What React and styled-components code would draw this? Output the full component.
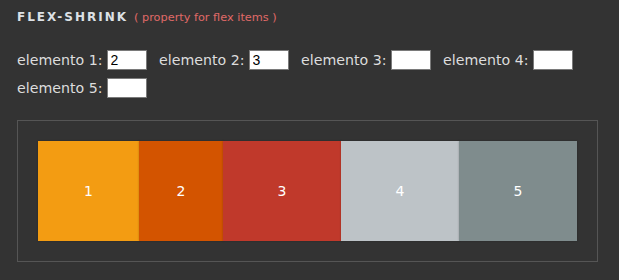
import React from "react";
import styled, { createGlobalStyle } from "styled-components";

const GlobalStyle = createGlobalStyle`
  html, body {
    margin: 0;
    background: #333333;
  }
  body {
    font-family: "DejaVu Sans", Verdana, sans-serif;
    color: #dddddd;
  }
`;

const items = [
  { label: "1", color: "#f39c12", shrink: 2 },
  { label: "2", color: "#d35400", shrink: 3 },
  { label: "3", color: "#c0392b", shrink: 1 },
  { label: "4", color: "#bdc3c7", shrink: 1 },
  { label: "5", color: "#7f8c8d", shrink: 1 },
];

export default function App() {
  return (
    <>
      <GlobalStyle />
      <Page>
        <Title>
          <Name>FLEX-SHRINK</Name>
          <Hint>( property for flex items )</Hint>
        </Title>

        <Controls>
          {items.map((item, index) => (
            <Field key={item.label}>
              <Label>elemento {index + 1}:</Label>
              <Input
                type="text"
                defaultValue={index < 2 ? String(item.shrink) : ""}
              />
            </Field>
          ))}
        </Controls>

        <Stage>
          {items.map((item) => (
            <Item key={item.label} color={item.color} shrink={item.shrink}>
              {item.label}
            </Item>
          ))}
        </Stage>
      </Page>
    </>
  );
}

const Page = styled.div`
  padding: 9px 17px 0 17px;
  width: 585px;
`;

const Title = styled.div`
  display: flex;
  align-items: baseline;
  gap: 6px;
  line-height: 16px;
`;

const Name = styled.span`
  font-size: 12px;
  font-weight: bold;
  letter-spacing: 2px;
  color: #dde1e6;
`;

const Hint = styled.span`
  font-size: 11.3px;
  color: #e06a68;
`;

const Controls = styled.div`
  display: flex;
  flex-wrap: wrap;
  column-gap: 12.5px;
  row-gap: 8px;
  margin-top: 24px;
`;

const Field = styled.label`
  display: flex;
  align-items: center;
  gap: 4px;
`;

const Label = styled.span`
  font-size: 14.2px;
  line-height: 20px;
  color: #dddddd;
`;

const Input = styled.input`
  box-sizing: border-box;
  width: 40px;
  height: 20px;
  margin: 0;
  padding: 0 3px;
  border: 1px solid #7a7a7a;
  background: #ffffff;
  font-family: "Liberation Sans", Arial, sans-serif;
  font-size: 14px;
  color: #000000;
  outline: none;
`;

const Stage = styled.div`
  display: flex;
  margin-top: 22px;
  padding: 20px;
  width: 539px;
  border: 1px solid #555555;
`;

const Item = styled.div`
  flex: 0 ${(props) => props.shrink} 135px;
  height: 100px;
  display: flex;
  align-items: center;
  justify-content: center;
  background: ${(props) => props.color};
  box-shadow: 0 0 2px rgba(0, 0, 0, 0.25);
  color: #ffffff;
  font-size: 14px;
`;
